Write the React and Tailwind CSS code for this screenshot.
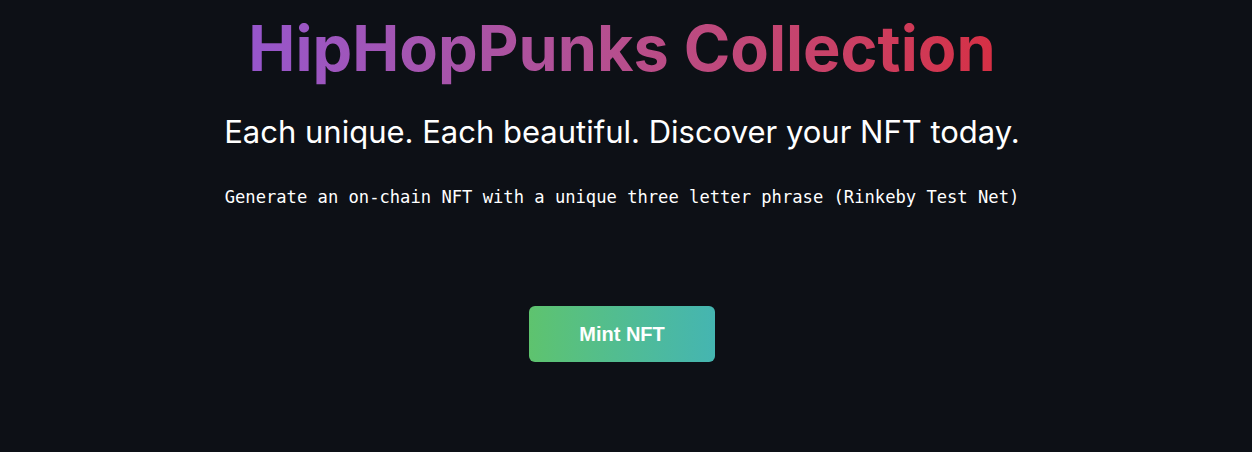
import React from 'react';

const App = () => {
  return (
    <div className="min-h-[452px] bg-[#0d1016] text-white flex flex-col items-center pr-[8px]">
      <h1 className="mt-[8px] text-[63px] leading-[80px] font-bold font-['Inter',sans-serif] bg-gradient-to-r from-[#9656cc] to-[#d62f44] bg-clip-text text-transparent">
        HipHopPunks Collection
      </h1>
      <p className="mt-[24px] text-[31px] leading-[40px] font-['Inter',sans-serif]">
        Each unique. Each beautiful. Discover your NFT today.
      </p>
      <p className="mt-[33px] text-[17.15px] leading-[24px] font-['DejaVu_Sans_Mono',monospace]">
        Generate an on-chain NFT with a unique three letter phrase (Rinkeby Test Net)
      </p>
      <button className="mt-[97px] w-[186px] h-[56px] rounded-md bg-gradient-to-r from-[#5ec36e] to-[#45b5b1] text-white text-[20px] font-bold font-['Liberation_Sans',Arial,sans-serif]">
        Mint NFT
      </button>
    </div>
  );
};

export default App;
